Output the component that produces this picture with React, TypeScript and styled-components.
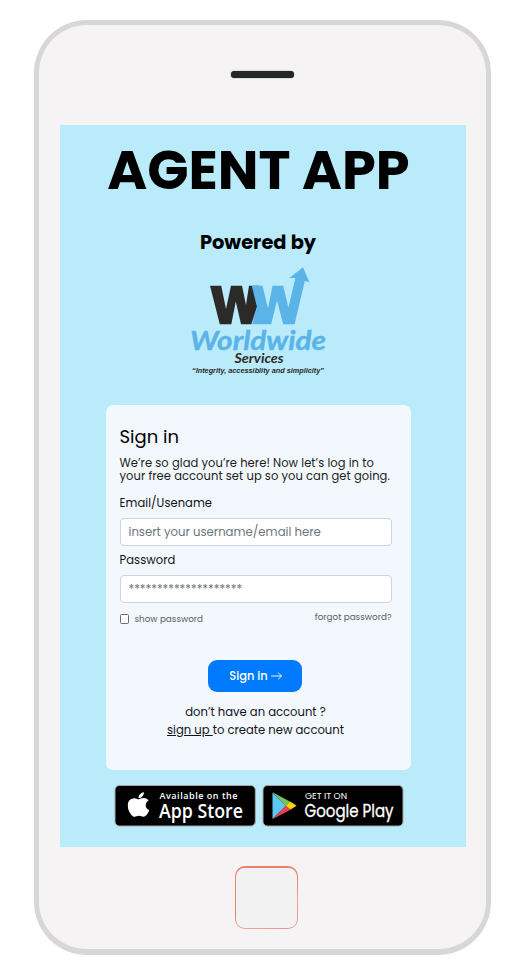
import React from "react";
import styled, { createGlobalStyle } from "styled-components";

const Global = createGlobalStyle`
  * { box-sizing: border-box; }
  body {
    margin: 0;
    background: #fff;
    color: #000;
    font-family: Poppins, Inter, sans-serif;
  }
`;

const Page = styled.main`
  width: 530px;
  height: 970px;
  padding: 20px 0 0 34px;
  overflow: hidden;
`;

const Phone = styled.div`
  display: flex;
  flex-direction: column;
  align-items: center;
  width: 457px;
  height: 935px;
  border: 5px solid #d7d7d7;
  border-bottom-width: 6px;
  border-radius: 53px;
  background: #f5f3f4;
`;

const Speaker = styled.div`
  width: 62.5px;
  height: 7.5px;
  margin-top: 45.5px;
  border-radius: 4px;
  background: #242829;
  box-shadow: 0 0 1px #242829;
`;

const Screen = styled.section`
  display: flex;
  flex-direction: column;
  align-items: center;
  width: 406px;
  height: 722px;
  margin-top: 47.3px;
  padding-right: 9px;
  background: #b9ebfa;
`;

const Title = styled.h1`
  margin: 17px 0 0 1px;
  font-size: 54.2px;
  line-height: 56px;
  font-weight: 700;
  white-space: nowrap;
`;

const Powered = styled.h2`
  margin: 31px 0 0;
  font-size: 19.4px;
  line-height: 28px;
  font-weight: 700;
  white-space: nowrap;
`;

const Logo = styled.svg`
  display: block;
  width: 160px;
  height: 120px;
  margin: 3px 0 0 3px;
`;

const Card = styled.form`
  display: flex;
  flex-direction: column;
  width: 305px;
  height: 365px;
  margin-top: 25px;
  padding: 18px 19px 0 14px;
  border-radius: 7px;
  background: #f3f8ff;
`;

const Heading = styled.h3`
  margin: 0;
  font-size: 18px;
  line-height: 27px;
  font-weight: 400;
`;

const Intro = styled.p`
  margin: 7px 0 0;
  font-size: 11.5px;
  line-height: 13px;
  font-weight: 400;
  letter-spacing: 0.07px;
  color: #1a1c20;
  white-space: nowrap;
`;

const Label = styled.label<{ $gap: number }>`
  margin-top: ${(p) => p.$gap}px;
  font-size: 11.5px;
  line-height: 16px;
  font-weight: 400;
  color: #111316;
  letter-spacing: 0.07px;
`;

const Field = styled.input<{ $gap: number }>`
  width: 272px;
  height: 28px;
  margin: ${(p) => p.$gap}px 0 0;
  padding: 0 8px;
  border: 1px solid #ced4da;
  border-radius: 4px;
  background: #fff;
  font: 400 11.7px Poppins, Inter, sans-serif;
  outline: none;
  &::placeholder {
    color: #6c757d;
    opacity: 1;
  }
`;

const Options = styled.div`
  display: flex;
  justify-content: space-between;
  height: 16px;
  margin-top: 8px;
  color: #5b6066;
  font-size: 8.8px;
  line-height: 16px;
  font-weight: 400;
`;

const Show = styled.label`
  display: flex;
  align-items: center;
  gap: 6px;
`;

const Check = styled.input`
  appearance: none;
  width: 9px;
  height: 10px;
  margin: 0;
  border: 1px solid #6b6b6b;
  border-radius: 1.5px;
  background: #fff;
`;

const Forgot = styled.a`
  line-height: 13px;
`;

const Submit = styled.button`
  display: flex;
  align-items: center;
  justify-content: center;
  gap: 3px;
  width: 94px;
  height: 32px;
  margin: 33px 0 0 88px;
  padding: 0 0 0 2px;
  border: 0;
  border-radius: 9px;
  background: #007bff;
  color: #fff;
  font: 500 11.4px Poppins, Inter, sans-serif;
`;

const Register = styled.p`
  width: 272px;
  margin: 11px 0 0;
  text-align: center;
  font-size: 11.6px;
  line-height: 18px;
  font-weight: 400;
  color: #111316;
  white-space: pre;
`;

const Link = styled.a`
  text-decoration: underline;
`;

const Stores = styled.div`
  display: flex;
  gap: 6.5px;
  margin: 15px 0 0 1.5px;
`;

const Badge = styled.svg`
  display: block;
  width: 142px;
  height: 42px;
`;

const Home = styled.div`
  width: 63px;
  height: 63px;
  margin: 19px 0 0 8px;
  padding: 1.3px;
  border-radius: 10px;
  background: linear-gradient(150deg, #e8826f 50%, #f0a29b 72%, #e78e9c);
`;

const HomeFace = styled.div`
  height: 100%;
  border-radius: 8.5px;
  background: #f2f2f2;
`;

export default function App() {
  return (
    <Page>
      <Global />
      <Phone>
        <Speaker />
        <Screen>
          <Title>AGENT APP</Title>
          <Powered>Powered by</Powered>
          <Logo viewBox="180 260 160 120" aria-label="Worldwide Services">
            <path d="M210 285.7H221.2L226 309 231 285.7H242L246 305 249 285.7H259L257 307 251.3 324.3H241L235.8 301.5 231.3 324.3H219.8Z" fill="#2b2a29" />
            <path d="M251.7 285.7H262.5L268 308.5 272.5 285.7H283.2L288.4 307.5 295.4 278H289.3L303 267.2 309.4 282.3 304.8 281 294.6 324.3H283.2L277 300.5 271.2 324.3H252L257 307Z" fill="#5ab4e8" />
            <text x="190" y="350" fontFamily="Lato" fontWeight="700" fontStyle="italic" fontSize="27.5" textLength="136" lengthAdjust="spacingAndGlyphs" fill="#5ab4e8" stroke="#5ab4e8" strokeWidth="0.4">Worldwide</text>
            <text x="234.5" y="363" fontFamily="Lato" fontWeight="700" fontStyle="italic" fontSize="13.5" textLength="49" lengthAdjust="spacingAndGlyphs" fill="#2b2a29">Services</text>
            <text x="192" y="373" fontFamily="Liberation Sans" fontWeight="700" fontStyle="italic" fontSize="7" textLength="132" lengthAdjust="spacingAndGlyphs" fill="#2b2a29">“Integrity, accessiblity and simplicity”</text>
          </Logo>
          <Card onSubmit={(e) => e.preventDefault()}>
            <Heading>Sign in</Heading>
            <Intro>
              We’re so glad you’re here! Now let’s log in to
              <br />
              your free account set up so you can get going.
            </Intro>
            <Label $gap={12} htmlFor="user">Email/Usename</Label>
            <Field $gap={7} id="user" placeholder="insert your username/email here" />
            <Label $gap={6} htmlFor="pass">Password</Label>
            <Field $gap={7} id="pass" placeholder="********************" />
            <Options>
              <Show>
                <Check type="checkbox" />
                show password
              </Show>
              <Forgot>forgot password?</Forgot>
            </Options>
            <Submit>
              Sign in
              <svg width="11" height="10" viewBox="0 0 11 10" fill="none" stroke="#fff" strokeWidth="0.9" strokeLinecap="round" strokeLinejoin="round">
                <path d="M.5 5h10M7.4 1.9 10.5 5 7.4 8.1" />
              </svg>
            </Submit>
            <Register>
              don’t have an account ?{"\n"}
              <Link>sign up </Link>to create new account
            </Register>
          </Card>
          <Stores>
            <Badge viewBox="114 785 142 42" aria-label="Available on the App Store">
              <rect x="115" y="785.5" width="140.3" height="40.5" rx="4.5" fill="#000" stroke="#a6a6a6" />
              <svg x="127.5" y="790.5" width="22" height="28" viewBox="0 0 384 512" preserveAspectRatio="none" fill="#fff">
                <path d="M318.7 268.7c-.2-36.7 16.4-64.4 50-84.8-18.8-26.9-47.2-41.7-84.7-44.6-35.5-2.8-74.3 20.7-88.5 20.7-15 0-49.4-19.7-76.4-19.7C63.3 141.2 4 184.8 4 273.5q0 39.3 14.4 81.2c12.8 36.7 59 126.7 107.2 125.2 25.2-.6 43-17.9 75.8-17.9 31.8 0 48.3 17.9 76.4 17.9 48.6-.7 90.4-82.5 102.6-119.3-65.2-30.7-61.7-90-61.7-91.9zm-56.6-164.2c27.3-32.4 24.8-61.9 24-72.5-24.1 1.4-52 16.4-67.9 34.9-17.5 19.8-27.8 44.3-25.6 71.9 26.1 2 49.9-11.4 69.5-34.3z" />
              </svg>
              <text x="159.5" y="799" fontFamily="Open Sans" fontWeight="600" fontSize="9" textLength="78" fill="#fff">Available on the</text>
              <text x="159" y="818" fontFamily="Open Sans" fontWeight="600" fontSize="19.5" textLength="84" lengthAdjust="spacingAndGlyphs" fill="#fff">App Store</text>
            </Badge>
            <Badge viewBox="262.5 785 142 42" aria-label="Get it on Google Play">
              <rect x="263.5" y="785.5" width="140" height="40.5" rx="4.5" fill="#000" stroke="#a6a6a6" />
              <path d="M273 792.5v26.5l13.5-13.3z" fill="#5bc9f4" />
              <path d="M273 792.3l18.3 9.7-4.8 4z" fill="#78c257" />
              <path d="M273 819.2l18.3-9.8-4.8-4z" fill="#ea4051" />
              <path d="M291.2 801.8l5.8 3.9-5.8 3.9-4.8-3.9z" fill="#ffd500" />
              <text x="305.5" y="798.5" fontFamily="Poppins" fontSize="8.8" textLength="42" lengthAdjust="spacingAndGlyphs" fill="#fff">GET IT ON</text>
              <text x="305" y="816.5" fontFamily="Poppins" fontWeight="400" fontSize="17.7" textLength="89" lengthAdjust="spacingAndGlyphs" fill="#fff" stroke="#fff" strokeWidth="0.3">Google Play</text>
            </Badge>
          </Stores>
        </Screen>
        <Home>
          <HomeFace />
        </Home>
      </Phone>
    </Page>
  );
}
